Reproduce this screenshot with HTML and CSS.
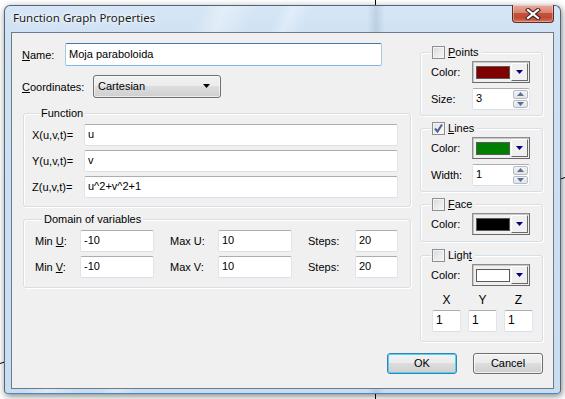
FILE: index.html
```html
<!DOCTYPE html>
<html lang="en">
<head>
    <meta charset="UTF-8">
    <title>Function Graph Properties</title>
    <link rel="stylesheet" href="styles.css">
</head>
<body>

<!-- graph axes behind the dialog -->
<svg class="backdrop" width="565" height="399" viewBox="0 0 565 399">
    <line x1="375.5" y1="0" x2="375.5" y2="399" stroke="#000" stroke-width="1"/>
    <line x1="0" y1="363.5" x2="565" y2="177.5" stroke="#000" stroke-width="1"/>
</svg>

<div class="window">
    <div class="titlebar">
        <span class="title">Function Graph Properties</span>
        <div class="close">
            <svg width="16" height="12" viewBox="0 0 16 12">
                <path d="M3 2 L13 10 M13 2 L3 10" stroke="#3a2424" stroke-width="4.2" stroke-linecap="square"/>
                <path d="M3 2 L13 10 M13 2 L3 10" stroke="#fff" stroke-width="2.2" stroke-linecap="square"/>
            </svg>
        </div>
    </div>

    <div class="client">
        <div class="main">
            <div class="left">
                <div class="row name-row">
                    <span class="lbl name-lbl"><u>N</u>ame:</span>
                    <input class="field name-field" type="text" value="Moja paraboloida">
                </div>
                <div class="row coord-row">
                    <span class="lbl coord-lbl"><u>C</u>oordinates:</span>
                    <div class="combo">
                        <span>Cartesian</span>
                        <svg class="combo-arrow" width="7" height="4" viewBox="0 0 7 4"><path d="M0 0 H7 L3.5 4 Z" fill="#000"/></svg>
                    </div>
                </div>

                <div class="group func-group">
                    <div class="legend">Function</div>
                    <div class="frow"><span class="lbl flbl">X(u,v,t)=</span><input class="field ffield" type="text" value="u"></div>
                    <div class="frow"><span class="lbl flbl">Y(u,v,t)=</span><input class="field ffield" type="text" value="v"></div>
                    <div class="frow"><span class="lbl flbl">Z(u,v,t)=</span><input class="field ffield" type="text" value="u^2+v^2+1"></div>
                </div>

                <div class="group domain-group">
                    <div class="legend">Domain of variables</div>
                    <div class="dgrid">
                        <span class="lbl">Min <u>U</u>:</span><input class="field" type="text" value="-10">
                        <span class="lbl gap-lbl">Max U:</span><input class="field" type="text" value="10">
                        <span class="lbl gap-lbl">Steps:</span><input class="field" type="text" value="20">
                        <span class="lbl">Min <u>V</u>:</span><input class="field" type="text" value="-10">
                        <span class="lbl gap-lbl">Max V:</span><input class="field" type="text" value="10">
                        <span class="lbl gap-lbl">Steps:</span><input class="field" type="text" value="20">
                    </div>
                </div>
            </div>

            <div class="right">
                <div class="group side points-group">
                    <div class="legend chk-legend"><span class="check"></span><u>P</u>oints</div>
                    <div class="srow">
                        <span class="lbl slbl">Color:</span>
                        <div class="colorpick"><span class="swatch maroon"></span><span class="drop"><svg width="7" height="4" viewBox="0 0 7 4"><path d="M0 0 H7 L3.5 4 Z" fill="#000080"/></svg></span></div>
                    </div>
                    <div class="srow">
                        <span class="lbl slbl">Size:</span>
                        <div class="spin">
                            <input type="text" value="3">
                            <span class="spin-btns">
                                <span class="sbtn"><svg width="7" height="4" viewBox="0 0 7 4"><path d="M0 4 H7 L3.5 0 Z" fill="#5a6e9c"/></svg></span>
                                <span class="sbtn"><svg width="7" height="4" viewBox="0 0 7 4"><path d="M0 0 H7 L3.5 4 Z" fill="#5a6e9c"/></svg></span>
                            </span>
                        </div>
                    </div>
                </div>

                <div class="group side lines-group">
                    <div class="legend chk-legend"><span class="check checked"><svg width="11" height="11" viewBox="0 0 11 11"><path d="M2 5.5 L4.5 8.5 L9 1.5" stroke="#4a5f97" stroke-width="2" fill="none"/></svg></span><u>L</u>ines</div>
                    <div class="srow">
                        <span class="lbl slbl">Color:</span>
                        <div class="colorpick"><span class="swatch green"></span><span class="drop"><svg width="7" height="4" viewBox="0 0 7 4"><path d="M0 0 H7 L3.5 4 Z" fill="#000080"/></svg></span></div>
                    </div>
                    <div class="srow">
                        <span class="lbl slbl">Width:</span>
                        <div class="spin">
                            <input type="text" value="1">
                            <span class="spin-btns">
                                <span class="sbtn"><svg width="7" height="4" viewBox="0 0 7 4"><path d="M0 4 H7 L3.5 0 Z" fill="#5a6e9c"/></svg></span>
                                <span class="sbtn"><svg width="7" height="4" viewBox="0 0 7 4"><path d="M0 0 H7 L3.5 4 Z" fill="#5a6e9c"/></svg></span>
                            </span>
                        </div>
                    </div>
                </div>

                <div class="group side face-group">
                    <div class="legend chk-legend"><span class="check"></span><u>F</u>ace</div>
                    <div class="srow">
                        <span class="lbl slbl">Color:</span>
                        <div class="colorpick"><span class="swatch black"></span><span class="drop"><svg width="7" height="4" viewBox="0 0 7 4"><path d="M0 0 H7 L3.5 4 Z" fill="#000080"/></svg></span></div>
                    </div>
                </div>

                <div class="group side light-group">
                    <div class="legend chk-legend"><span class="check"></span>Ligh<u>t</u></div>
                    <div class="srow">
                        <span class="lbl slbl">Color:</span>
                        <div class="colorpick"><span class="swatch white"></span><span class="drop"><svg width="7" height="4" viewBox="0 0 7 4"><path d="M0 0 H7 L3.5 4 Z" fill="#000080"/></svg></span></div>
                    </div>
                    <div class="xyz">
                        <span class="axis">X</span><span class="axis">Y</span><span class="axis">Z</span>
                        <input class="field" type="text" value="1">
                        <input class="field" type="text" value="1">
                        <input class="field" type="text" value="1">
                    </div>
                </div>
            </div>
        </div>

        <div class="footer">
            <button class="btn default">OK</button>
            <button class="btn">Cancel</button>
        </div>
    </div>
</div>

</body>
</html>
```

FILE: styles.css
```css
* {
    box-sizing: border-box;
}

body {
    position: relative;
    margin: 0;
    width: 565px;
    height: 399px;
    overflow: hidden;
    background: #fff;
    font-family: "Liberation Sans", Arial, sans-serif;
    font-size: 11px;
    color: #000;
}

.backdrop {
    position: absolute;
    left: 0;
    top: 0;
}

/* window frame */
.window {
    position: relative;
    display: flex;
    flex-direction: column;
    margin: 5px 0 0 4px;
    width: 557px;
    height: 389px;
    border: 1px solid #52657a;
    border-bottom-color: #4a86bf;
    border-radius: 6px 6px 4px 4px;
    background:
        linear-gradient(90deg, transparent 362px, rgba(90, 120, 150, 0.18) 371px, transparent 380px),
        linear-gradient(115deg, transparent 180px, rgba(255, 255, 255, 0.35) 200px, transparent 230px, transparent 250px, rgba(255, 255, 255, 0.3) 262px, transparent 280px),
        linear-gradient(180deg, #d6e6f6 0, #cfe1f3 30px, #c9ddf1 100%);
    box-shadow: 1px 2px 7px rgba(0, 0, 0, 0.5);
}

.titlebar {
    display: flex;
    align-items: flex-start;
    height: 26px;
    padding-left: 8px;
}

.title {
    margin-top: 4px;
    font-family: "Noto Sans", "Open Sans", sans-serif;
    font-size: 11.5px;
    line-height: 16px;
    color: #1a1a1a;
    text-shadow: 0 0 6px #fff, 0 0 3px #fff;
}

.close {
    display: flex;
    align-items: center;
    justify-content: center;
    margin: -1px 6px 0 auto;
    width: 42px;
    height: 18px;
    border: 1px solid #5b2b25;
    border-top: none;
    border-radius: 0 0 4px 4px;
    background: linear-gradient(180deg, #e9a99a 0, #d88575 45%, #c5503a 50%, #c24a33 75%, #d8735c 100%);
    box-shadow: inset 0 0 0 1px rgba(255, 255, 255, 0.35);
}

/* client area */
.client {
    display: flex;
    flex-direction: column;
    margin: 0 6px;
    height: 357px;
    border: 1px solid #6c7a89;
    background: #f0f0f0;
    padding: 0 9px 0 10px;
}

.main {
    display: flex;
    gap: 9px;
}

.left {
    width: 389px;
    padding-top: 10px;
}

.right {
    width: 123px;
    padding-top: 19px;
}

.lbl {
    white-space: nowrap;
}

.row {
    display: flex;
    align-items: center;
    height: 23px;
}

.coord-row {
    margin-top: 9px;
}

.name-lbl {
    width: 43px;
}

.coord-lbl {
    width: 71px;
}

.field {
    height: 22px;
    border: 1px solid #dbdfe6;
    border-top-color: #abadb3;
    border-left-color: #e2e3ea;
    border-right-color: #e2e3ea;
    border-radius: 2px;
    background: #fff;
    padding: 0 3px 2px;
    font-family: "Liberation Sans", Arial, sans-serif;
    font-size: 11px;
    color: #000;
    outline: none;
}

.name-field {
    width: 317px;
    height: 23px;
    border-color: #7eb4ea;
    border-top-color: #3d7bad;
    border-left-color: #a4c9e3;
    border-right-color: #a4c9e3;
}

.combo {
    display: flex;
    align-items: center;
    justify-content: space-between;
    width: 128px;
    height: 23px;
    padding: 0 10px 1px 4px;
    border: 1px solid #707070;
    border-radius: 3px;
    background: linear-gradient(180deg, #f2f2f2 0, #ebebeb 50%, #dddddd 50%, #cfcfcf 100%);
    box-shadow: inset 0 0 0 1px rgba(255, 255, 255, 0.6);
}

/* group boxes */
.group {
    border: 1px solid #d5dfe5;
    border-radius: 3px;
    box-shadow: inset 1px 1px 0 #fff, 1px 1px 0 #fff;
}

.legend {
    display: flex;
    align-items: center;
    width: max-content;
    height: 13px;
    margin: -7px 0 0 7px;
    padding: 0 2px;
    background: #f0f0f0;
    line-height: 13px;
}

.func-group {
    margin: 15px 0 0 1px;
    padding: 0 12px 8px 8px;
}

.frow {
    display: flex;
    align-items: center;
    margin-top: 4px;
}

.flbl {
    width: 52px;
}

.ffield {
    width: 314px;
}

.domain-group {
    margin: 12px 0 0 1px;
    padding: 0 12px 9px 11px;
}

.dgrid {
    display: grid;
    grid-template-columns: 45px 74px 64px 74px 63px 43px;
    row-gap: 4px;
    align-items: center;
    margin-top: 4px;
}

.dgrid .field {
    width: 100%;
}

.dgrid .gap-lbl {
    margin-left: 16px;
}

/* right side groups */
.side {
    padding: 0 12px 5px 10px;
}

.side .legend {
    margin-left: 0;
    padding: 0 3px 0 1px;
}

.lines-group {
    margin-top: 12px;
}

.face-group {
    margin-top: 12px;
    padding-bottom: 6px;
}

.light-group {
    margin-top: 13px;
    padding-bottom: 9px;
}

.check {
    display: flex;
    align-items: center;
    justify-content: center;
    width: 13px;
    height: 13px;
    margin-right: 3px;
    border: 1px solid #8e8f8f;
    background: linear-gradient(135deg, #d3d6dc 0, #e9eaec 50%, #f6f6f6 100%);
    box-shadow: inset 0 0 0 1px #f4f4f4;
}

.check.checked {
    background: linear-gradient(135deg, #dfe2e6 0, #f2f2f3 60%, #fafafa 100%);
}

.srow {
    display: flex;
    align-items: center;
    margin-top: 5px;
}

.chk-legend + .srow {
    margin-top: 2px;
}

.slbl {
    width: 41px;
}

.colorpick {
    display: flex;
    align-items: center;
    width: 58px;
    height: 22px;
    padding: 0 1px 0 3px;
    border: 1px solid #8d8d8d;
    border-right-color: #6a6a6a;
    border-bottom-color: #6a6a6a;
    background: #f0f0f0;
    box-shadow: inset 1px 1px 0 #c8c8c8;
}

.swatch {
    width: 34px;
    height: 13px;
    border: 1px solid #5a5a5a;
}

.swatch.maroon { background: #800000; }
.swatch.green { background: #008000; }
.swatch.black { background: #000; }
.swatch.white { background: #fff; }

.drop {
    display: flex;
    align-items: center;
    justify-content: center;
    width: 17px;
    height: 18px;
    margin-left: auto;
    border: 1px solid;
    border-color: #fff #696969 #696969 #fff;
    background: #f0f0f0;
}

.spin {
    display: flex;
    width: 58px;
    height: 22px;
    border: 1px solid #dbdfe6;
    border-top-color: #abadb3;
    border-left-color: #e2e3ea;
    border-right-color: #e2e3ea;
    border-radius: 2px;
    background: #fff;
}

.spin input {
    flex: 1;
    min-width: 0;
    border: none;
    padding: 0 3px 2px;
    font-family: "Liberation Sans", Arial, sans-serif;
    font-size: 11px;
    outline: none;
}

.spin-btns {
    display: flex;
    flex-direction: column;
    gap: 1px;
    width: 16px;
    padding: 1px 1px 1px 0;
}

.sbtn {
    display: flex;
    align-items: center;
    justify-content: center;
    flex: 1;
    border: 1px solid #b7bcc4;
    border-radius: 2px;
    background: linear-gradient(180deg, #f4f4f4, #e1e3e6);
}

.xyz {
    display: grid;
    grid-template-columns: 29px 29px 29px;
    column-gap: 7px;
    margin: 7px 0 0 1px;
}

.axis {
    height: 14px;
    line-height: 14px;
    text-align: center;
    font-size: 12px;
    margin-bottom: 3px;
}

.xyz .field {
    width: 29px;
    font-size: 12px;
}

/* buttons */
.footer {
    display: flex;
    justify-content: flex-end;
    gap: 16px;
    margin-top: 11px;
    padding-right: 1px;
}

.btn {
    width: 70px;
    height: 21px;
    border: 1px solid #707070;
    border-radius: 3px;
    background: linear-gradient(180deg, #f2f2f2 0, #ebebeb 50%, #dddddd 50%, #cfcfcf 100%);
    box-shadow: inset 0 0 0 1px rgba(255, 255, 255, 0.7);
    font-family: "Liberation Sans", Arial, sans-serif;
    font-size: 11px;
    color: #000;
    padding: 0 0 1px;
}

.btn.default {
    border-color: #3c7fb1;
    box-shadow: inset 0 0 0 1px #48d6f6;
}
```
